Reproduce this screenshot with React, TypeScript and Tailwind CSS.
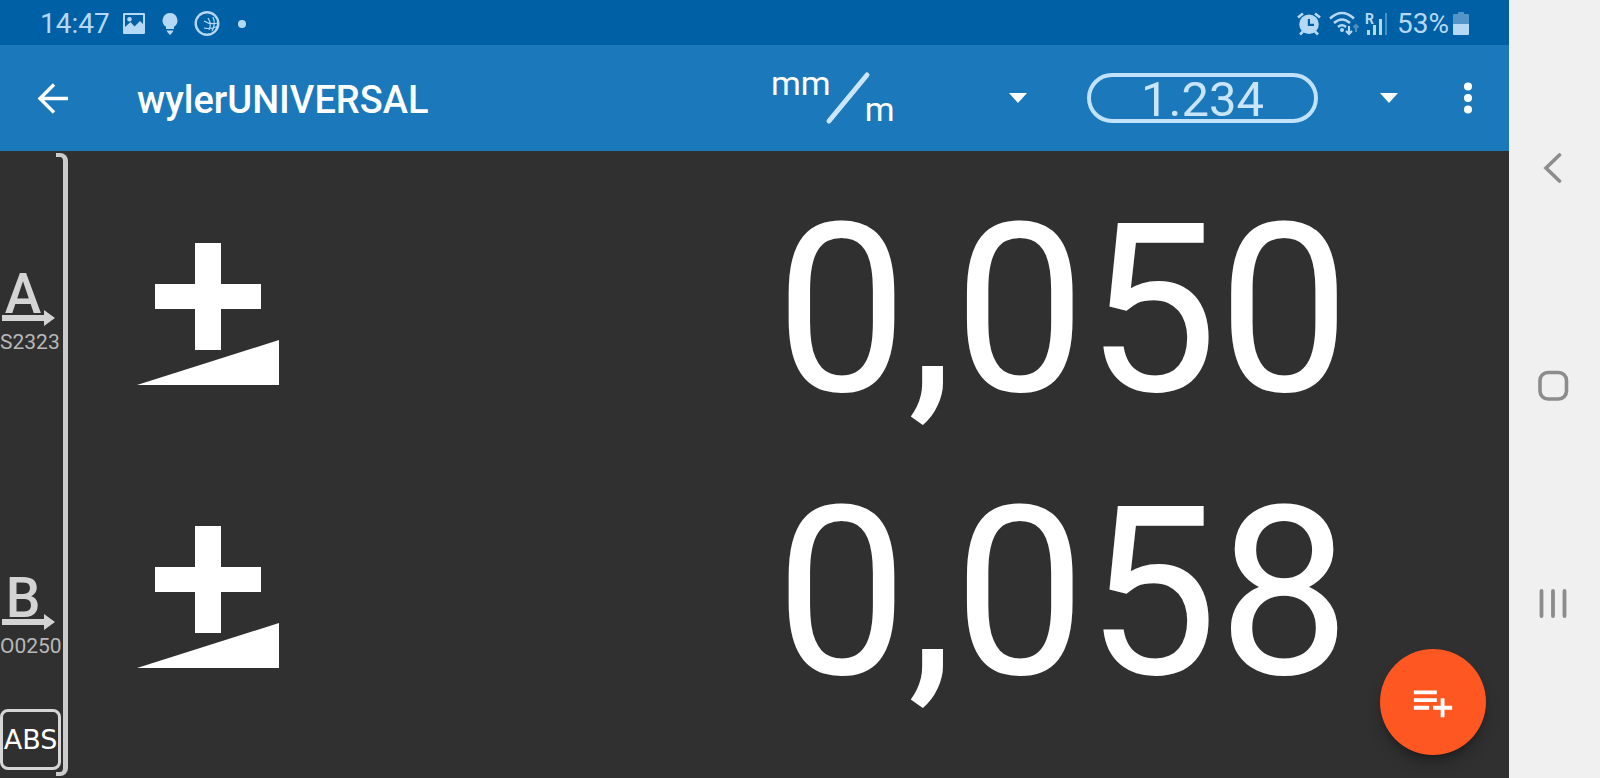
import React from 'react';

interface Channel {
  id: string;
  serial: string;
  value: string;
}

const CHANNELS: Channel[] = [
  { id: 'A', serial: 'S2323', value: '0,050' },
  { id: 'B', serial: 'O0250', value: '0,058' },
];

function StatusBar(): React.ReactElement {
  return (
    <div className="flex h-[45px] items-center bg-[#0060a5] px-10 pt-0.5 text-[28px] leading-none text-[#b5d9f5]">
      <span>14:47</span>

      {/* Notifications */}
      <svg className="ml-3 h-6 w-6" viewBox="0 0 24 24" fill="currentColor">
        <path fillRule="evenodd" d="M2 1h20a1 1 0 0 1 1 1v19a1 1 0 0 1-1 1H2a1 1 0 0 1-1-1V2a1 1 0 0 1 1-1zM3 3v12l5.5-5 4 4.500L18 9l3 3V3zM7.5 5a2.300 2.300 0 1 1 0 4.600 2.300 2.300 0 0 1 0-4.600z" />
      </svg>
      <svg className="ml-3 h-6 w-6" viewBox="0 0 24 24" fill="currentColor">
        <path d="M12 1a7.500 7.500 0 0 1 4 13.800V17H8v-2.200A7.500 7.500 0 0 1 12 1zM8.500 18.500h7L14 21h-.5l-.5 1.500h-2l-.5-1.500H10z" />
      </svg>
      <svg className="ml-3 h-[26px] w-[26px]" viewBox="0 0 26 26" fill="none" stroke="currentColor">
        <circle cx="13" cy="12.500" r="11.300" strokeWidth="2.400" />
        <path strokeWidth="1.200" d="M10 10q6 4 14 2M10 17q7 1.500 13-1.500M14 7q4 6 1 12M19 6q3 7-1 14" />
      </svg>
      <span className="ml-[18px] h-2 w-2 rounded-full bg-current" />

      <div className="flex-1" />

      {/* System indicators */}
      <svg className="h-6 w-6" viewBox="0 0 24 24" fill="currentColor">
        <path fillRule="evenodd" d="M12 2.500a9.800 9.800 0 1 1 0 19.600 9.800 9.800 0 0 1 0-19.600zM10.800 7v7h6.200v-2.200h-4V7z" />
        <path stroke="currentColor" strokeWidth="2.600" d="M1 5.500l5-4M23 5.500l-5-4M3 22.500l3-3M21 22.500l-3-3" />
      </svg>
      <svg className="ml-2 h-[26px] w-[30px]" viewBox="0 0 30 26" fill="none" stroke="currentColor" strokeWidth="2.500">
        <path d="M1 7.500q12-11 24 0M5 12q8-7 16 0M9 16q4-3.500 8 0" />
        <circle cx="13" cy="19" r="2" fill="currentColor" stroke="none" />
        <path strokeWidth="2.200" d="M20 15v8M17 20l3 3 3-3" />
        <path strokeWidth="2.200" opacity=".4" d="M27 21v-7M24.500 16.500L27 14l2.500 2.500" />
      </svg>
      <div className="ml-1.5 flex h-6 w-[22px] items-end justify-between">
        <span className="-mr-2 self-start text-sm leading-none font-bold">R</span>
        <svg className="h-6 w-5 shrink-0" viewBox="0 0 20 24" fill="currentColor">
          <path d="M0 18h3v5H0zM6 13h3v10H6zM12 7h3v16h-3z" />
          <path opacity=".4" d="M18 1h2v22h-2z" />
        </svg>
      </div>
      <span className="ml-2.5">53%</span>
      <svg className="ml-1 h-6 w-4" viewBox="0 0 16 24" fill="currentColor">
        <path opacity=".45" d="M5 0h6v2h4q1 0 1 1v9H0V3q0-1 1-1h4z" />
        <path d="M0 12h16v10q0 1-1 1H1q-1 0-1-1z" />
      </svg>
    </div>
  );
}

interface SpinnerProps {
  label: string;
  options: string[];
  className: string;
  children: React.ReactNode;
}

// The drawn value sits under a transparent native select
function Spinner({ label, options, className, children }: SpinnerProps): React.ReactElement {
  return (
    <label className={`relative flex items-center justify-between ${className}`}>
      {children}
      <svg className="h-[10px] w-[18px] text-white" viewBox="0 0 18 10" fill="currentColor">
        <path d="M0 0h18l-9 10z" />
      </svg>
      <select aria-label={label} className="absolute inset-0 cursor-pointer opacity-0">
        {options.map((option) => (
          <option key={option}>{option}</option>
        ))}
      </select>
    </label>
  );
}

function AppBar(): React.ReactElement {
  return (
    <header className="flex h-[106px] items-center bg-[#1a78bb] pr-[28px] pl-9 text-white">
      <button type="button" aria-label="Back" className="flex h-12 w-8 items-center justify-center">
        <svg className="h-8 w-8" viewBox="0 0 32 32" fill="none" stroke="currentColor" strokeWidth="3.400">
          <path d="M32 16.500H4M18 2.500l-14 14 14 14" />
        </svg>
      </button>
      <h1 className="ml-[69px] pt-1 text-[38px] leading-none font-medium">wylerUNIVERSAL</h1>

      <div className="flex-1" />

      <Spinner label="Unit" options={['mm/m']} className="w-[256px]">
        <span className="flex h-[50px] pb-1 text-[34px] leading-5">
          <span>mm</span>
          <svg className="h-12 w-[34px] overflow-visible" viewBox="0 0 34 48" fill="none">
            <path stroke="#cbe5fa" strokeWidth="5" strokeLinecap="round" d="M-2 48L36 2" />
          </svg>
          <span className="self-end">m</span>
        </span>
      </Spinner>
      <Spinner label="Display format" options={['1.234']} className="ml-[60px] w-[311px]">
        <span className="flex h-[50px] w-[231px] items-center justify-center rounded-full border-4 border-[#c0e2fb] pt-0.5 text-[49px] leading-none text-[#c9e5fb]">
          1.234
        </span>
      </Spinner>

      <button type="button" aria-label="More options" className="ml-[57px] flex h-12 w-[26px] items-center justify-center">
        <svg className="h-8 w-2" viewBox="0 0 8 32" fill="currentColor">
          <circle cx="4" cy="4.500" r="4" />
          <circle cx="4" cy="16" r="4" />
          <circle cx="4" cy="27.500" r="4" />
        </svg>
      </button>
    </header>
  );
}

function ChannelLabel({ channel }: { channel: Channel }): React.ReactElement {
  return (
    <div className="flex flex-col text-[#d4d4d4]">
      <span className="w-[46px] text-center text-[55px] leading-8 font-medium">{channel.id}</span>
      <svg className="ml-0.5 h-4 w-[53px] shrink-0" viewBox="0 0 53 16" fill="currentColor">
        <path d="M0 5h42V0l11 8-11 8v-5H0z" />
      </svg>
      <span className="mt-1 text-[21px] leading-6 text-[#b8b8b8]">{channel.serial}</span>
    </div>
  );
}

function Sidebar(): React.ReactElement {
  return (
    <aside className="flex w-[68px]">
      <div className="flex w-14 flex-col pb-2 whitespace-nowrap">
        <div className="grow-5" />
        <ChannelLabel channel={CHANNELS[0]} />
        <div className="grow-9" />
        <ChannelLabel channel={CHANNELS[1]} />
        <div className="grow-2" />
        <button
          type="button"
          className="flex h-[61px] w-[61px] items-center justify-center rounded-lg border-[3px] border-[#d6d6d6] font-['DejaVu_Sans',sans-serif] text-[27px] leading-none text-white"
        >
          ABS
        </button>
      </div>
      <div className="my-0.5 w-3 rounded-r-lg border-y-4 border-r-[5px] border-[#cccccc]" />
    </aside>
  );
}

function Reading({ value }: { value: string }): React.ReactElement {
  return (
    <div className="flex flex-1 items-center justify-between pr-[159px] pl-[69px]">
      <svg className="mt-1.5 h-[142px] w-[142px]" viewBox="0 0 142 142" fill="currentColor">
        <path d="M58 0h26v41h40v25H84v41H58V66H18V41h40z" />
        <path d="M0 142l142-45v45z" />
      </svg>
      <span className="text-[235px] leading-none">{value}</span>
    </div>
  );
}

function NavigationBar(): React.ReactElement {
  return (
    <nav className="flex w-[91px] flex-col bg-[#f0f0f0] pt-[60px] pr-1 pb-[66px] text-[#8c8c8c]">
      <button type="button" aria-label="Back" className="flex flex-1 items-center justify-center">
        <svg className="h-8 w-8" viewBox="0 0 32 32" fill="none" stroke="currentColor" strokeWidth="3.600" strokeLinecap="round">
          <path d="M22.500 2L9 15l13.500 13" />
        </svg>
      </button>
      <button type="button" aria-label="Home" className="flex flex-1 items-center justify-center">
        <svg className="h-8 w-8" viewBox="0 0 32 32" fill="none" stroke="currentColor" strokeWidth="3.600">
          <rect x="3" y="2.500" width="26.500" height="26.500" rx="8" />
        </svg>
      </button>
      <button type="button" aria-label="Recent apps" className="flex flex-1 items-center justify-center">
        <svg className="h-8 w-8" viewBox="0 0 32 32" fill="none" stroke="currentColor" strokeWidth="3.800" strokeLinecap="round">
          <path d="M4.500 4v25M16 4v25M27.500 4v25" />
        </svg>
      </button>
    </nav>
  );
}

export default function App(): React.ReactElement {
  return (
    <div className="flex min-h-screen bg-[#303030] font-[Roboto,sans-serif]">
      <div className="flex flex-1 flex-col">
        <StatusBar />
        <AppBar />
        <div className="relative flex flex-1">
          <Sidebar />
          <main className="flex flex-1 flex-col pt-[18px] pb-[43px] text-white">
            {CHANNELS.map((channel) => (
              <Reading key={channel.id} value={channel.value} />
            ))}
          </main>

          {/* Floating action button */}
          <button
            type="button"
            aria-label="Add measurement"
            className="absolute right-[23px] bottom-[23px] flex h-[106px] w-[106px] items-center justify-center rounded-full bg-[#ff5722] text-white shadow-lg shadow-black/30"
          >
            <svg className="h-[46px] w-[46px]" viewBox="0 0 24 24" fill="currentColor">
              <path d="M14 10H2v2h12v-2zm0-4H2v2h12V6zm4 8v-4h-2v4h-4v2h4v4h2v-4h4v-2h-4zM2 16h8v-2H2v2z" />
            </svg>
          </button>
        </div>
      </div>
      <NavigationBar />
    </div>
  );
}
